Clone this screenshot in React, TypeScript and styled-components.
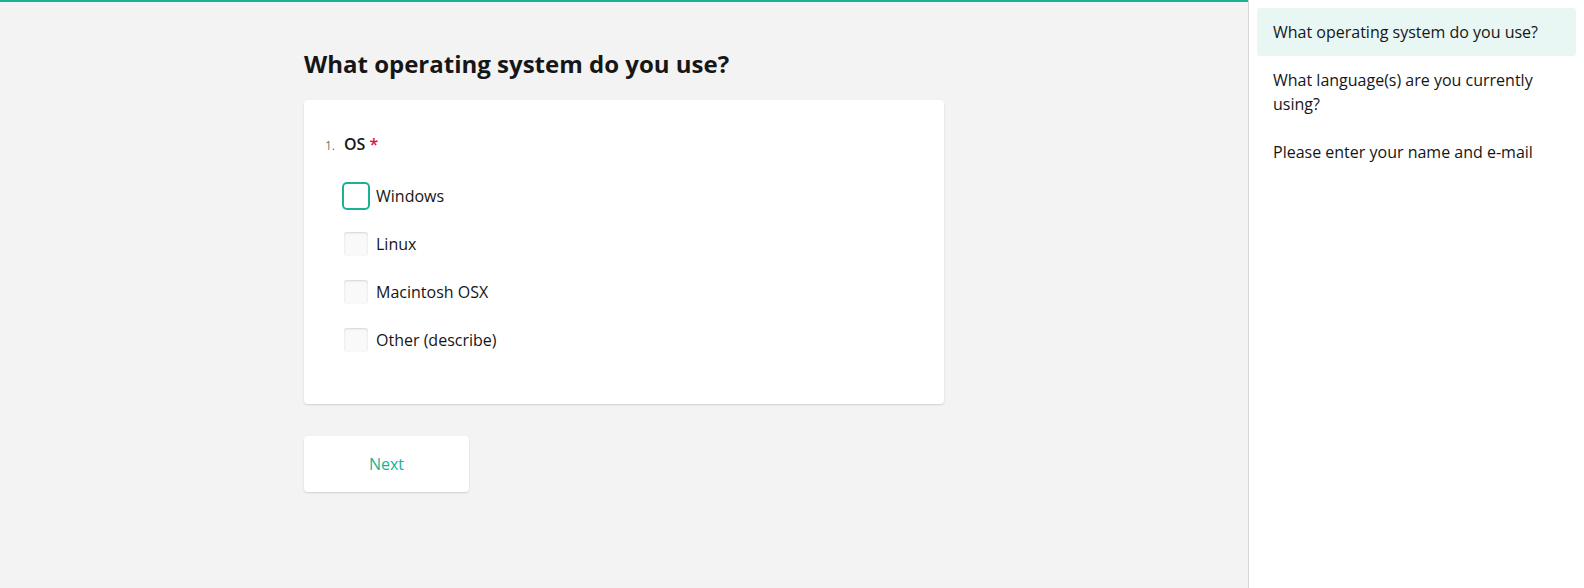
import React from "react";
import styled, { createGlobalStyle } from "styled-components";

const GlobalStyle = createGlobalStyle`
  * { box-sizing: border-box; }
  html, body { margin: 0; padding: 0; }
  body {
    font-family: "Open Sans", "Noto Sans", sans-serif;
    background: #f3f3f3;
    color: #161616;
  }
`;

const Layout = styled.div`
  display: flex;
  width: 1584px;
  height: 588px;
  overflow: hidden;
`;

const Main = styled.main`
  flex: 1;
  display: flex;
  flex-direction: column;
  background: #f3f3f3;
`;

const Progress = styled.div`
  height: 2px;
  background: #19b394;
  flex-shrink: 0;
`;

const Content = styled.div`
  width: 640px;
  margin: 0 auto;
  padding-top: 46px;
  display: flex;
  flex-direction: column;
  align-items: flex-start;
`;

const PageTitle = styled.h1`
  margin: 0 0 20px;
  font-size: 24px;
  line-height: 32px;
  font-weight: 700;
  color: #161616;
`;

const Card = styled.section`
  align-self: stretch;
  background: #fff;
  border-radius: 4px;
  box-shadow: 0 1px 2px rgba(0, 0, 0, 0.15);
  padding: 32px 40px 40px;
`;

const QuestionTitle = styled.div`
  display: flex;
  align-items: baseline;
  font-size: 16px;
  line-height: 24px;
  font-weight: 600;
  margin-bottom: 14px;
`;

const Number = styled.span`
  width: 19px;
  margin-left: -19px;
  font-size: 12px;
  font-weight: 400;
  color: rgba(0, 0, 0, 0.6);
`;

const Required = styled.span`
  color: #e60a3e;
  margin-left: 4px;
`;

const Item = styled.label`
  display: flex;
  align-items: center;
  padding: 12px 0;
  font-size: 16px;
  line-height: 24px;
  cursor: pointer;
`;

const Box = styled.span<{ $focused?: boolean }>`
  width: 24px;
  height: 24px;
  flex-shrink: 0;
  border-radius: 3px;
  background: ${(p) => (p.$focused ? "#fff" : "#f9f9f9")};
  box-shadow: ${(p) =>
    p.$focused
      ? "0 0 0 2px #19b394"
      : "inset 0 1px 2px rgba(0, 0, 0, 0.15)"};
`;

const ItemText = styled.span`
  margin-left: 8px;
  color: #161616;
`;

const NextButton = styled.button`
  margin-top: 32px;
  min-width: 165px;
  height: 56px;
  padding: 0 48px;
  border: none;
  border-radius: 4px;
  background: #fff;
  box-shadow: 0 1px 2px rgba(0, 0, 0, 0.15);
  color: #19b394;
  font-family: inherit;
  font-size: 16px;
  font-weight: 500;
  line-height: 24px;
  cursor: pointer;
`;

const Sidebar = styled.aside`
  width: 336px;
  flex-shrink: 0;
  background: #fff;
  border-left: 1px solid #d6d6d6;
  padding: 8px;
  display: flex;
  flex-direction: column;
`;

const NavItem = styled.div<{ $active?: boolean }>`
  padding: 12px 16px;
  border-radius: 3px;
  font-size: 16px;
  line-height: 24px;
  color: #161616;
  background: ${(p) => (p.$active ? "#e8f7f4" : "transparent")};
`;

const options = ["Windows", "Linux", "Macintosh OSX", "Other (describe)"];
const pages = [
  "What operating system do you use?",
  "What language(s) are you currently using?",
  "Please enter your name and e-mail",
];

export default function App() {
  return (
    <>
      <GlobalStyle />
      <Layout>
        <Main>
          <Progress />
          <Content>
            <PageTitle>What operating system do you use?</PageTitle>
            <Card>
              <QuestionTitle>
                <Number>1.</Number>
                <span>OS</span>
                <Required>*</Required>
              </QuestionTitle>
              {options.map((o, i) => (
                <Item key={o}>
                  <Box $focused={i === 0} />
                  <ItemText>{o}</ItemText>
                </Item>
              ))}
            </Card>
            <NextButton>Next</NextButton>
          </Content>
        </Main>
        <Sidebar>
          {pages.map((p, i) => (
            <NavItem key={p} $active={i === 0}>
              {p}
            </NavItem>
          ))}
        </Sidebar>
      </Layout>
    </>
  );
}
